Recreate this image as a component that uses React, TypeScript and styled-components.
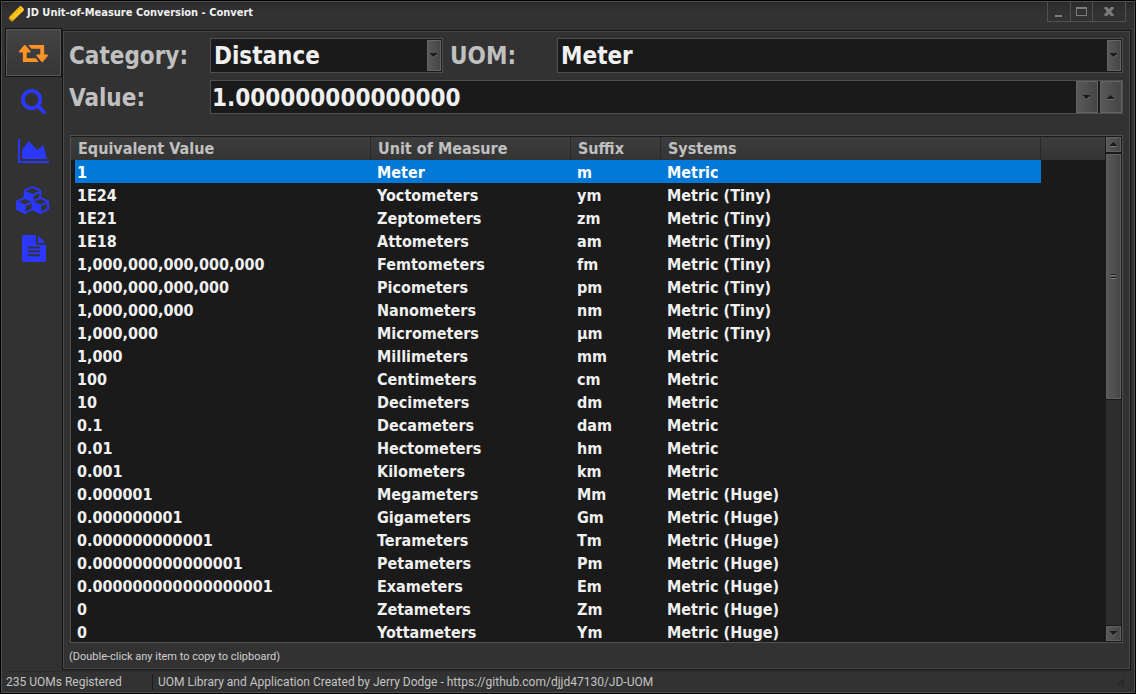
import React, { useState } from 'react';
import styled, { createGlobalStyle } from 'styled-components';

const GlobalStyle = createGlobalStyle`
  * { box-sizing: border-box; }
  body {
    margin: 0;
    background: #000;
    font-family: 'DejaVu Sans Condensed', 'DejaVu Sans', sans-serif;
  }
  button, input, select { font: inherit; color: inherit; margin: 0; border-radius: 0; }
`;

const WindowFrame = styled.div`
  height: 100vh;
  border: 1px solid #000;
  background: #323232;
`;

const WindowBody = styled.div`
  height: 100%;
  border: 1px solid #4f4f4f;
  display: flex;
  flex-direction: column;
`;

const TitleBar = styled.header`
  display: flex;
  justify-content: space-between;
  align-items: flex-start;
  height: 26px;
  flex: none;
  padding: 0 8px 0 6px;
  background: linear-gradient(#2a2a2a, #323232 10px);
`;

const Title = styled.h1`
  display: flex;
  align-items: center;
  gap: 2px;
  margin: 0;
  height: 22px;
  font-size: 11px;
  line-height: 16px;
  font-weight: bold;
  color: #f0f0f0;
`;

const WindowButtons = styled.div`
  display: flex;
  border: 1px solid #505050;
  border-top: 0;
`;

const WindowButton = styled.button<{ $wide?: boolean }>`
  width: ${p => (p.$wide ? 33 : 22)}px;
  height: 19px;
  padding: 0;
  border: 0;
  background: transparent;
  color: #7c7c7c;
  display: flex;
  align-items: center;
  justify-content: center;
  & + & { border-left: 1px solid #505050; }
`;

const Main = styled.div`
  flex: 1;
  min-height: 0;
  display: flex;
  padding: 0 3px;
`;

const Sidebar = styled.nav`
  width: 57px;
  flex: none;
  display: flex;
  flex-direction: column;
`;

const SideButton = styled.button<{ $active?: boolean }>`
  height: 49px;
  width: 57px;
  padding: 0;
  display: flex;
  align-items: center;
  justify-content: center;
  border: 1px solid ${p => (p.$active ? '#141414' : 'transparent')};
  background: ${p => (p.$active ? 'linear-gradient(#444, #363636)' : 'transparent')};
  box-shadow: ${p => (p.$active ? 'inset 0 0 0 1px #575757' : 'none')};
  color: ${p => (p.$active ? '#ff9326' : '#2b38fa')};
`;

const Panel = styled.main`
  flex: 1;
  min-width: 0;
  margin-top: 2px;
  border: 1px solid #151515;
  box-shadow: inset 0 0 0 1px #484848;
  display: flex;
  flex-direction: column;
  padding: 7px 7px 4px 6px;
`;

const FormGrid = styled.div`
  display: grid;
  grid-template-columns: 141px 233px 114px minmax(0, 1fr);
  grid-auto-rows: 35px;
  row-gap: 7px;
  font-size: 24px;
  font-weight: bold;
`;

const FieldLabel = styled.label<{ $inset?: boolean }>`
  align-self: center;
  line-height: 32px;
  color: #c0c0c0;
  padding-left: ${p => (p.$inset ? 7 : 0)}px;
`;

const FieldBox = styled.div<{ $full?: boolean }>`
  grid-column: ${p => (p.$full ? '2 / -1' : 'auto')};
  height: ${p => (p.$full ? 34 : 35)}px;
  display: flex;
  border: 1px solid #4f4f4f;
  background: #1a1a1a;
  color: #f0f0f0;
  padding: ${p => (p.$full ? '0' : '1px')};
`;

const Select = styled.select`
  flex: 1;
  min-width: 0;
  appearance: none;
  border: 0;
  outline: 0;
  background: transparent;
  padding: 0 2px;
  option { color: #f0f0f0; background: #1a1a1a; font-size: 16px; }
`;

const Input = styled.input`
  flex: 1;
  min-width: 0;
  border: 0;
  outline: 0;
  background: transparent;
  padding: 2px 1px 0;
`;

const metal = 'linear-gradient(to right, #595959, #464646)';

const DropMark = styled.span`
  width: 14px;
  border: 1px solid #646464;
  background: ${metal};
  display: flex;
  align-items: center;
  justify-content: center;
`;

const SpinButton = styled.button`
  width: 22px;
  padding: 0;
  border: 1px solid #646464;
  background: ${metal};
  display: flex;
  align-items: center;
  justify-content: center;
  & + & { margin-left: 2px; }
`;

const ListBox = styled.div`
  flex: 1;
  min-height: 0;
  margin: 20px 0 0 1px;
  border: 1px solid #505050;
  background: #1a1a1a;
  display: flex;
  overflow: hidden;
`;

const ListView = styled.div`
  flex: 1;
  min-width: 0;
  overflow-y: auto;
  scrollbar-width: none;
`;

const Table = styled.table`
  width: 100%;
  table-layout: fixed;
  border-collapse: separate;
  border-spacing: 0;
  font-size: 16px;
  line-height: 20px;
  font-weight: bold;
  color: #f0f0f0;
`;

const HeadCell = styled.th`
  position: sticky;
  top: 0;
  height: 24px;
  padding: 0 0 0 7px;
  text-align: left;
  color: #c0c0c0;
  background: linear-gradient(#3d3d3d, #343434);
  border-top: 1px solid #1a1a1a;
  border-right: 1px solid #282828;
  &:last-child { border-right: 0; }
`;

const Row = styled.tr<{ $selected?: boolean }>`
  color: ${p => (p.$selected ? '#fff' : 'inherit')};
  td:not(:last-child) { background: ${p => (p.$selected ? '#0078d7' : 'transparent')}; }
  td:first-child {
    background: ${p => (p.$selected ? 'linear-gradient(to right, transparent 4px, #0078d7 4px)' : 'transparent')};
  }
`;

const Cell = styled.td`
  height: 23px;
  padding: 2px 0 0 6px;
  white-space: nowrap;
`;

const ScrollTrack = styled.div`
  width: 17px;
  flex: none;
  display: flex;
  flex-direction: column;
  background: #2d2d2d;
  border: 1px solid #1a1a1a;
`;

const ScrollButton = styled.button`
  height: 15px;
  flex: none;
  padding: 0;
  border: 1px solid #606060;
  background: ${metal};
  display: flex;
  align-items: center;
  justify-content: center;
`;

const ScrollRange = styled.div`
  flex: 1;
  min-height: 0;
  border-top: 2px solid #1a1a1a;
  border-bottom: 1px solid #1a1a1a;
`;

const Thumb = styled.div`
  height: 52%;
  border: 1px solid #606060;
  background: ${metal};
  box-shadow: 0 1px 0 #1a1a1a;
  display: flex;
  align-items: center;
  justify-content: center;
`;

const Hint = styled.p`
  margin: 0;
  padding-top: 5px;
  height: 22px;
  font: 11px/17px Roboto, sans-serif;
  color: #d0d0d0;
`;

const StatusBar = styled.footer`
  flex: none;
  display: flex;
  align-items: center;
  height: 21px;
  margin: 1px 3px 0;
  border-top: 1px solid #2a2a2a;
  font: 12px/16px Roboto, sans-serif;
  color: #c4c4c4;
`;

const StatusCell = styled.span<{ $first?: boolean }>`
  width: ${p => (p.$first ? '148px' : 'auto')};
  flex: ${p => (p.$first ? 'none' : '1')};
  padding-left: ${p => (p.$first ? 1 : 5)}px;
  border-right: ${p => (p.$first ? '1px solid #1c1c1c' : '0')};
`;

const Arrow = ({ up = false }: { up?: boolean }) => (
  <svg width="8" height="5" viewBox="0 0 8 5" aria-hidden="true" shapeRendering="crispEdges">
    <path d={up ? 'M0 4h7v-1h-1v-1h-1v-1h-1v-1h-1v1h-1v1h-1v1h-1z' : 'M0 0h7v1h-1v1h-1v1h-1v1h-1v-1h-1v-1h-1v-1h-1z'} fill="#1c1c1c" />
    <path d={up ? 'M0 4h7v1h-7z' : 'M3 4h1v1h-1zM4 3h1v1h-1zM5 2h1v1h-1z'} fill="#707070" />
  </svg>
);

const Ruler = () => (
  <svg width="17" height="17" viewBox="0 0 17 17" aria-hidden="true">
    <path d="M1 12.5 11.5 2q1-1 2 0l2 2q1 1 0 2L5 16q-1 1-2 0l-2-2q-.8-.8 0-1.500z" fill="#d99a10" />
    <path d="M1.500 11.500 11.500 1.500q1-1 2 0l2 2q.7.7 0 1.500l-10.500 10z" fill="#ffc91e" />
    <path d="m3.500 10 1.500 1.500M5.500 8l1 1M7.500 6 9 7.500M9.500 4l1 1M11.500 2.500 13 4" stroke="#b57d0b" fill="none" />
  </svg>
);

const sideItems = [
  { name: 'Convert', w: 29, h: 19, box: '0 256 1920 1280', d: 'M1280 1504q0 13-9.5 22.5t-22.5 9.5h-960q-8 0-13.5-2t-9-7-5.5-8-3-11.5-1-11.5v-600h-192q-26 0-45-19t-19-45q0-24 15-41l320-384q19-22 49-22t49 22l320 384q15 17 15 41 0 26-19 45t-45 19h-192v384h576q16 0 25 11l160 192q7 10 7 21zm640-416q0 24-15 41l-320 384q-20 23-49 23t-49-23l-320-384q-15-17-15-41 0-26 19-45t45-19h192v-384h-576q-16 0-25-12l-160-192q-7-9-7-20 0-13 9.500-22.500t22.500-9.500h960q8 0 13.500 2t9 7 5.500 8 3 11.500 1 11.500v600h192q26 0 45 19t19 45z' },
  { name: 'Search', w: 25, h: 25, box: '64 128 1664 1664', d: 'M1216 832q0-185-131.5-316.5t-316.5-131.5-316.5 131.5-131.5 316.5 131.5 316.5 316.5 131.5 316.5-131.5 131.5-316.5zm512 832q0 52-38 90t-90 38q-54 0-90-38l-343-342q-179 124-399 124-143 0-273.5-55.5t-225-150-150-225-55.5-273.5 55.5-273.5 150-225 225-150 273.5-55.5 273.5 55.5 225 150 150 225 55.5 273.5q0 220-124 399l343 343q37 37 37 90z' },
  { name: 'Chart', w: 31, h: 24, box: '0 128 2048 1536', d: 'M2048 1536v128h-2048v-1536h128v1408h1920zm-384-1024l256 896h-1664v-576l448-576 576 576z' },
  { name: 'Systems', w: 35, h: 28, box: '0 0 2304 1792', d: 'M640 1632l384-192v-314l-384 164v342zm-64-454l404-173-404-173-404 173zm1088 454l384-192v-314l-384 164v342zm-64-454l404-173-404-173-404 173zm-448-293l384-165v-266l-384 164v267zm-64-379l441-189-441-189-441 189zm1088 518v416q0 36-19 67t-52 47l-448 224q-25 14-57 14t-57-14l-448-224q-4-2-7-4-2 2-7 4l-448 224q-25 14-57 14t-57-14l-448-224q-33-16-52-47t-19-67v-416q0-38 21.5-70t56.5-48l434-186v-400q0-38 21.5-70t56.5-48l448-192q23-10 50-10t50 10l448 192q35 16 56.5 48t21.5 70v400l434 186q36 16 57 48t21 70z' },
  { name: 'Report', w: 24, h: 27, box: '128 0 1536 1792', d: 'M1596 476q14 14 28 36h-472v-472q22 14 36 28zm-476 164h544v1056q0 40-28 68t-68 28h-1344q-40 0-68-28t-28-68v-1600q0-40 28-68t68-28h800v544q0 40 28 68t68 28zm160 736v-64q0-14-9-23t-23-9h-704q-14 0-23 9t-9 23v64q0 14 9 23t23 9h704q14 0 23-9t9-23zm0-256v-64q0-14-9-23t-23-9h-704q-14 0-23 9t-9 23v64q0 14 9 23t23 9h704q14 0 23-9t9-23zm0-256v-64q0-14-9-23t-23-9h-704q-14 0-23 9t-9 23v64q0 14 9 23t23 9h704q14 0 23-9t9-23z' },
];

const units = [
  ['1', 'Meter', 'm', 'Metric'],
  ['1E24', 'Yoctometers', 'ym', 'Metric (Tiny)'],
  ['1E21', 'Zeptometers', 'zm', 'Metric (Tiny)'],
  ['1E18', 'Attometers', 'am', 'Metric (Tiny)'],
  ['1,000,000,000,000,000', 'Femtometers', 'fm', 'Metric (Tiny)'],
  ['1,000,000,000,000', 'Picometers', 'pm', 'Metric (Tiny)'],
  ['1,000,000,000', 'Nanometers', 'nm', 'Metric (Tiny)'],
  ['1,000,000', 'Micrometers', 'µm', 'Metric (Tiny)'],
  ['1,000', 'Millimeters', 'mm', 'Metric'],
  ['100', 'Centimeters', 'cm', 'Metric'],
  ['10', 'Decimeters', 'dm', 'Metric'],
  ['0.1', 'Decameters', 'dam', 'Metric'],
  ['0.01', 'Hectometers', 'hm', 'Metric'],
  ['0.001', 'Kilometers', 'km', 'Metric'],
  ['0.000001', 'Megameters', 'Mm', 'Metric (Huge)'],
  ['0.000000001', 'Gigameters', 'Gm', 'Metric (Huge)'],
  ['0.000000000001', 'Terameters', 'Tm', 'Metric (Huge)'],
  ['0.000000000000001', 'Petameters', 'Pm', 'Metric (Huge)'],
  ['0.000000000000000001', 'Exameters', 'Em', 'Metric (Huge)'],
  ['0', 'Zetameters', 'Zm', 'Metric (Huge)'],
  ['0', 'Yottameters', 'Ym', 'Metric (Huge)'],
];

export default function App() {
  const [page, setPage] = useState(0);
  const [selected, setSelected] = useState(0);
  const [value, setValue] = useState('1.000000000000000');
  const step = (by: number) => setValue(v => (Number(v) + by).toFixed(15));

  return (
    <WindowFrame>
      <GlobalStyle />
      <WindowBody>
        <TitleBar>
          <Title><Ruler />JD Unit-of-Measure Conversion - Convert</Title>
          <WindowButtons>
            <WindowButton aria-label="Minimize">
              <svg width="8" height="12"><path d="M0 9h7v2H0z" fill="currentColor" /></svg>
            </WindowButton>
            <WindowButton aria-label="Maximize">
              <svg width="11" height="9"><path d="M0 0h11v9H0zM1 2v6h9V2z" fill="currentColor" fillRule="evenodd" /></svg>
            </WindowButton>
            <WindowButton aria-label="Close" $wide>
              <svg width="10" height="9"><path d="m1 0 8 9M9 0 1 9" stroke="currentColor" strokeWidth="3" /></svg>
            </WindowButton>
          </WindowButtons>
        </TitleBar>
        <Main>
          <Sidebar>
            {sideItems.map((item, i) => (
              <SideButton key={item.name} aria-label={item.name} $active={page === i} onClick={() => setPage(i)}>
                <svg width={item.w} height={item.h} viewBox={item.box} preserveAspectRatio="none" fill="currentColor"><path d={item.d} /></svg>
              </SideButton>
            ))}
          </Sidebar>
          <Panel>
            <FormGrid>
              <FieldLabel htmlFor="category">Category:</FieldLabel>
              <FieldBox>
                <Select id="category"><option>Distance</option></Select>
                <DropMark><Arrow /></DropMark>
              </FieldBox>
              <FieldLabel htmlFor="uom" $inset>UOM:</FieldLabel>
              <FieldBox>
                <Select id="uom"><option>Meter</option></Select>
                <DropMark><Arrow /></DropMark>
              </FieldBox>
              <FieldLabel htmlFor="value">Value:</FieldLabel>
              <FieldBox $full>
                <Input id="value" value={value} onChange={e => setValue(e.target.value)} />
                <SpinButton aria-label="Decrease" onClick={() => step(-1)}><Arrow /></SpinButton>
                <SpinButton aria-label="Increase" onClick={() => step(1)}><Arrow up /></SpinButton>
              </FieldBox>
            </FormGrid>
            <ListBox>
              <ListView>
                <Table>
                  <colgroup>
                    <col width="300" /><col width="200" /><col width="90" /><col width="380" /><col />
                  </colgroup>
                  <thead>
                    <tr>
                      <HeadCell>Equivalent Value</HeadCell>
                      <HeadCell>Unit of Measure</HeadCell>
                      <HeadCell>Suffix</HeadCell>
                      <HeadCell>Systems</HeadCell>
                      <HeadCell />
                    </tr>
                  </thead>
                  <tbody>
                    {units.map((unit, i) => (
                      <Row key={unit[1]} $selected={selected === i} onClick={() => setSelected(i)}>
                        {unit.map((text, c) => <Cell key={c}>{text}</Cell>)}
                        <Cell />
                      </Row>
                    ))}
                  </tbody>
                </Table>
              </ListView>
              <ScrollTrack>
                <ScrollButton aria-label="Scroll up"><Arrow up /></ScrollButton>
                <ScrollRange>
                  <Thumb>
                    <svg width="5" height="5" aria-hidden="true"><path d="M0 0h5v1H0zM0 3h5v1H0z" fill="#1c1c1c" /><path d="M0 1h5v1H0zM0 4h5v1H0z" fill="#808080" /></svg>
                  </Thumb>
                </ScrollRange>
                <ScrollButton aria-label="Scroll down"><Arrow /></ScrollButton>
              </ScrollTrack>
            </ListBox>
            <Hint>(Double-click any item to copy to clipboard)</Hint>
          </Panel>
        </Main>
        <StatusBar>
          <StatusCell $first>235 UOMs Registered</StatusCell>
          <StatusCell>UOM Library and Application Created by Jerry Dodge - https://github.com/djjd47130/JD-UOM</StatusCell>
          <svg width="14" height="8" viewBox="0 0 14 8" aria-hidden="true" fill="#161616" shapeRendering="crispEdges">
            <path d="M6 0h1v1h-1zM4 2h1v1h-1zM6 2h1v1h-1zM2 4h1v1h-1zM4 4h1v1h-1zM6 4h1v1h-1zM0 6h1v1h-1zM2 6h1v1h-1zM4 6h1v1h-1zM6 6h1v1h-1z" />
          </svg>
        </StatusBar>
      </WindowBody>
    </WindowFrame>
  );
}
